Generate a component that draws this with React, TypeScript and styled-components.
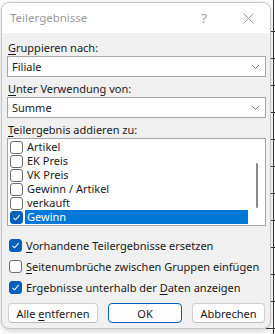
import React, { FC } from 'react'
import styled, { createGlobalStyle } from 'styled-components'

const GlobalStyle = createGlobalStyle`
  html, body {
    margin: 0;
    padding: 0;
    background: #ffffff;
  }
  body {
    font-family: "Segoe UI", "Noto Sans", "Liberation Sans", sans-serif;
    font-size: 11px;
    color: #1a1a1a;
  }
`

// the spreadsheet peeking out behind the dialog
const Screen = styled.div`
  width: 275px;
  height: 334px;
  box-sizing: border-box;
  padding: 2px 0 0 1px;
  overflow: hidden;
  background:
    linear-gradient(#3a3a3a, #3a3a3a) 273px 0 / 1px 100% no-repeat,
    repeating-linear-gradient(to bottom, transparent 0, transparent 26px, #3a3a3a 26px, #3a3a3a 27px) 266px 5px / 9px 100% no-repeat,
    #ffffff;
`

const Dialog = styled.div`
  width: 270px;
  height: 327px;
  box-sizing: border-box;
  border: 1px solid #c4c4c4;
  border-radius: 8px;
  background: #f0f0f0;
  box-shadow: 0 2px 6px rgba(0, 0, 0, 0.18);
  overflow: hidden;
  display: flex;
  flex-direction: column;
`

const TitleBar = styled.div`
  height: 30px;
  background: #ffffff;
  display: flex;
  align-items: center;
  padding-left: 8px;
  color: #9a9a9a;
  font-size: 11.5px;
  flex-shrink: 0;
`

const Title = styled.div`
  flex: 1;
  padding-bottom: 1px;
`

const TitleButton = styled.div`
  width: 44px;
  height: 30px;
  display: flex;
  align-items: center;
  justify-content: center;
  color: #a0a0a0;
  font-size: 13px;
`

const Body = styled.div`
  flex: 1;
  display: flex;
  flex-direction: column;
  padding: 7px 4px 0 5px;
`

const Label = styled.div<{ $gap?: number }>`
  height: 15px;
  line-height: 15px;
  padding-left: 1px;
  margin-top: ${(p) => p.$gap ?? 0}px;
  margin-bottom: 1px;
  white-space: nowrap;
`

const Key = styled.span`
  text-decoration: underline;
  text-underline-offset: 2px;
`

const Select = styled.div`
  height: 21px;
  box-sizing: border-box;
  border: 1px solid #a8a8a8;
  background: #ffffff;
  display: flex;
  align-items: center;
  padding-left: 4px;
`

const SelectText = styled.div`
  flex: 1;
`

const Chevron = styled.div`
  width: 20px;
  display: flex;
  justify-content: center;
`

const ListBox = styled.div`
  height: 88px;
  box-sizing: border-box;
  border: 1px solid #a8a8a8;
  background: #ffffff;
  display: flex;
  padding-top: 1px;
`

const Items = styled.div`
  flex: 1;
  display: flex;
  flex-direction: column;
  padding-left: 2px;
`

const ItemRow = styled.div`
  height: 14px;
  display: flex;
  align-items: center;
`

const ItemText = styled.div<{ $selected?: boolean }>`
  flex: 1;
  height: 14px;
  line-height: 14px;
  margin-left: 2px;
  padding-left: 2px;
  background: ${(p) => (p.$selected ? '#0078d7' : 'transparent')};
  color: ${(p) => (p.$selected ? '#ffffff' : '#1a1a1a')};
`

const ScrollTrack = styled.div`
  width: 17px;
  display: flex;
  justify-content: center;
  padding-top: 23px;
`

const ScrollThumb = styled.div`
  width: 2px;
  height: 45px;
  border-radius: 1px;
  background: #8a8a8a;
`

const Box = styled.div<{ $checked?: boolean }>`
  width: 13px;
  height: 13px;
  box-sizing: border-box;
  border-radius: 3px;
  border: 1px solid ${(p) => (p.$checked ? '#005fb8' : '#6e6e6e')};
  background: ${(p) => (p.$checked ? '#005fb8' : '#ffffff')};
  display: flex;
  align-items: center;
  justify-content: center;
  flex-shrink: 0;
`

const Options = styled.div`
  display: flex;
  flex-direction: column;
  margin-top: 9px;
  padding-left: 2px;
`

const OptionRow = styled.div`
  height: 21px;
  display: flex;
  align-items: center;
  gap: 4px;
  white-space: nowrap;
`

const ButtonRow = styled.div`
  display: flex;
  gap: 10px;
  margin-top: 5px;
  padding-left: 1px;
`

const Button = styled.div<{ $width: number; $default?: boolean }>`
  width: ${(p) => p.$width}px;
  height: 20px;
  box-sizing: border-box;
  border: 1px solid ${(p) => (p.$default ? '#005fb8' : '#d0d0d0')};
  border-bottom-color: ${(p) => (p.$default ? '#005fb8' : '#bcbcbc')};
  border-radius: 4px;
  background: #fdfdfd;
  display: flex;
  align-items: center;
  justify-content: center;
`

const Check: FC = () => (
  <svg width="9" height="9" viewBox="0 0 9 9">
    <path d="M1.5 4.8 L3.6 6.8 L7.6 2.2" fill="none" stroke="#ffffff" strokeWidth="1.1" />
  </svg>
)

const CheckBox: FC<{ checked?: boolean }> = ({ checked }) => (
  <Box $checked={checked}>{checked && <Check />}</Box>
)

const ChevronIcon: FC = () => (
  <svg width="9" height="6" viewBox="0 0 9 6">
    <path d="M1 1 L4.5 4.5 L8 1" fill="none" stroke="#7a7a7a" strokeWidth="1" />
  </svg>
)

const CloseIcon: FC = () => (
  <svg width="11" height="11" viewBox="0 0 11 11">
    <path d="M0.5 0.5 L10.5 10.5 M10.5 0.5 L0.5 10.5" stroke="#9a9a9a" strokeWidth="1" />
  </svg>
)

const fields = ['Artikel', 'EK Preis', 'VK Preis', 'Gewinn / Artikel', 'verkauft', 'Gewinn']

export default function App() {
  return (
    <>
      <GlobalStyle />
      <Screen>
        <Dialog>
          <TitleBar>
            <Title>Teilergebnisse</Title>
            <TitleButton>?</TitleButton>
            <TitleButton>
              <CloseIcon />
            </TitleButton>
          </TitleBar>
          <Body>
            <Label>
              <Key>G</Key>ruppieren nach:
            </Label>
            <Select>
              <SelectText>Filiale</SelectText>
              <Chevron>
                <ChevronIcon />
              </Chevron>
            </Select>
            <Label $gap={4}>
              <Key>U</Key>nter Verwendung von:
            </Label>
            <Select>
              <SelectText>Summe</SelectText>
              <Chevron>
                <ChevronIcon />
              </Chevron>
            </Select>
            <Label $gap={4}>
              <Key>T</Key>eilergebnis addieren zu:
            </Label>
            <ListBox>
              <Items>
                {fields.map((f) => (
                  <ItemRow key={f}>
                    <CheckBox checked={f === 'Gewinn'} />
                    <ItemText $selected={f === 'Gewinn'}>{f}</ItemText>
                  </ItemRow>
                ))}
              </Items>
              <ScrollTrack>
                <ScrollThumb />
              </ScrollTrack>
            </ListBox>
            <Options>
              <OptionRow>
                <CheckBox checked />
                <span>
                  <Key>V</Key>orhandene Teilergebnisse ersetzen
                </span>
              </OptionRow>
              <OptionRow>
                <CheckBox />
                <span>
                  <Key>S</Key>eitenumbrüche zwischen Gruppen einfügen
                </span>
              </OptionRow>
              <OptionRow>
                <CheckBox checked />
                <span>
                  Ergebnisse unterhalb der <Key>D</Key>aten anzeigen
                </span>
              </OptionRow>
            </Options>
            <ButtonRow>
              <Button $width={90}>
                <span>
                  Alle <Key>e</Key>ntfernen
                </span>
              </Button>
              <Button $width={74} $default>
                OK
              </Button>
              <Button $width={73}>Abbrechen</Button>
            </ButtonRow>
          </Body>
        </Dialog>
      </Screen>
    </>
  )
}
